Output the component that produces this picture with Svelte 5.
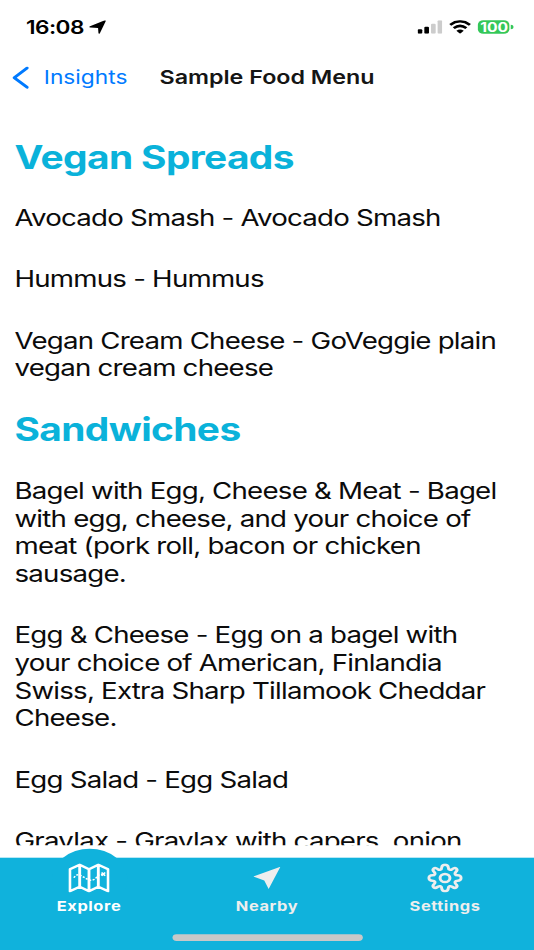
<script>
  const sections = [
    {
      title: 'Vegan Spreads',
      items: [
        { name: 'Avocado Smash', description: 'Avocado Smash' },
        { name: 'Hummus', description: 'Hummus' },
        { name: 'Vegan Cream Cheese', description: 'GoVeggie plain vegan cream cheese' }
      ]
    },
    {
      title: 'Sandwiches',
      items: [
        {
          name: 'Bagel with Egg, Cheese & Meat',
          description: 'Bagel with egg, cheese, and your choice of meat (pork roll, bacon or chicken sausage.'
        },
        {
          name: 'Egg & Cheese',
          description: 'Egg on a bagel with your choice of American, Finlandia Swiss, Extra Sharp Tillamook Cheddar Cheese.'
        },
        { name: 'Egg Salad', description: 'Egg Salad' },
        { name: 'Gravlax', description: 'Gravlax with capers, onion' }
      ]
    }
  ];

  const tabs = [
    { id: 'explore', label: 'Explore' },
    { id: 'nearby', label: 'Nearby' },
    { id: 'settings', label: 'Settings' }
  ];

  let active = $state('explore');
</script>

<div class="viewport">
  <div class="screen">
    <div class="status">
      <span class="time">16:08</span>
      <svg class="location" viewBox="0 0 12 12">
        <path d="M11.8 .8 7.6 11.3Q7.1 12.3 6.7 11.2L6.4 6.7.9 6.3Q-.5 5.9.7 5.1L10.8.2Q12.2-.2 11.8.8Z" />
      </svg>
      <svg class="signal" viewBox="0 0 18 12">
        <rect x="0" y="8" width="3.4" height="4" rx="0.9" />
        <rect x="4.9" y="5.7" width="3.4" height="6.3" rx="0.9" />
        <rect class="off" x="9.8" y="3" width="3.4" height="9" rx="0.9" />
        <rect class="off" x="14.6" y="0" width="3.4" height="12" rx="0.9" />
      </svg>
      <svg class="wifi" viewBox="0 0 16 12">
        <path class="arc" d="M.8 4.1Q8-2.3 15.2 4.1M3.4 7Q8 3 12.6 7" />
        <path d="M5.3 9.4Q8 7.2 10.7 9.4L8 12Z" />
      </svg>
      <div class="battery">
        <span>100</span>
      </div>
    </div>

    <header>
      <button class="back">
        <svg viewBox="0 0 12 20"><path d="M10.8 1.4 1.4 10l9.4 8.6" /></svg>
        <span>Insights</span>
      </button>
      <h1>Sample Food Menu</h1>
    </header>

    <main>
      {#each sections as section}
        <section>
          <h2>{section.title}</h2>
          {#each section.items as item}
            <p>{item.name} - {item.description}</p>
          {/each}
        </section>
      {/each}
    </main>

    <nav>
      <div class="tabs">
        {#each tabs as tab}
          <button class="tab" class:active={active === tab.id} onclick={() => (active = tab.id)}>
            {#if tab.id === 'explore'}
              <svg class="map" viewBox="0 0 30 26">
                <path d="M1 5.2 8.2 1.2 15 5.2 21.8 1.2 29 5.2V24.8L21.8 20.8 15 24.8 8.2 20.8 1 24.8ZM8.2 1.2V20.8M15 5.2V24.8M21.8 1.2V20.8" />
                <path class="trail" d="M4 12.8Q6 8.8 9 10.8T15 15Q19 15.4 20.5 12.4T25 10" />
                <path class="cross" d="m24.2 8.2 2.6 2.8m0-2.8L24.2 11" />
              </svg>
            {:else if tab.id === 'nearby'}
              <svg class="arrow" viewBox="0 0 20 20">
                <path d="M19.8.1 11.2 19.8 8 12.3 0 8.7Z" />
              </svg>
            {:else}
              <svg class="gear" viewBox="0 0 26 26">
                <path d="M10.6 3.8C10.6.3 15.4.3 15.4 3.8C15.4 5.8 17 6.2 18.2 5.2C20.7 2.9 23.1 5.3 20.8 7.8C19.8 9 20.2 10.6 22.2 10.6C25.7 10.6 25.7 15.4 22.2 15.4C20.2 15.4 19.8 17 20.8 18.2C23.1 20.7 20.7 23.1 18.2 20.8C17 19.8 15.4 20.2 15.4 22.2C15.4 25.7 10.6 25.7 10.6 22.2C10.6 20.2 9 19.8 7.8 20.8C5.3 23.1 2.9 20.7 5.2 18.2C6.2 17 5.8 15.4 3.8 15.4C.3 15.4.3 10.6 3.8 10.6C5.8 10.6 6.2 9 5.2 7.8C2.9 5.3 5.3 2.9 7.8 5.2C9 6.2 10.6 5.8 10.6 3.8Z" />
                <circle cx="13" cy="13" r="3.6" />
              </svg>
            {/if}
            <span>{tab.label}</span>
          </button>
        {/each}
      </div>
      <div class="home"></div>
    </nav>
  </div>
</div>

<style>
  :global(body) {
    margin: 0;
    background: #fff;
  }

  .viewport {
    width: 534px;
    height: 950px;
    overflow: hidden;
  }

  /* 390x844 phone layout stretched over the whole viewport */
  .screen {
    display: flex;
    flex-direction: column;
    width: 390px;
    height: 844px;
    transform: scale(1.36923, 1.12559);
    transform-origin: 0 0;
    background: #fff;
    color: #0b0b0b;
    font-family: Inter, 'Liberation Sans', sans-serif;
  }

  button {
    padding: 0;
    border: 0;
    background: none;
    font-family: inherit;
  }

  .status {
    display: flex;
    flex: none;
    align-items: center;
    height: 48px;
    padding: 0 17.6px 0 19px;
    box-sizing: border-box;
  }

  .time {
    font-size: 16.5px;
    font-weight: 600;
    letter-spacing: -0.4px;
    color: #000;
  }

  .location {
    width: 12.4px;
    height: 12.4px;
    margin-left: 4px;
  }

  .signal {
    width: 18px;
    height: 12px;
    margin-left: auto;
  }

  .off {
    fill: #ccc;
  }

  .wifi {
    width: 16px;
    height: 12px;
    margin: 0 5px;
  }

  .arc {
    fill: none;
    stroke: #000;
    stroke-width: 2.2;
  }

  .battery {
    position: relative;
    width: 23px;
    height: 12.8px;
    border-radius: 4px;
    background: #34c759;
    color: #fff;
    font-size: 11.5px;
    font-weight: 700;
    line-height: 12.8px;
    text-align: center;
  }

  .battery::after {
    content: '';
    position: absolute;
    top: 4.4px;
    right: -2.4px;
    width: 1.4px;
    height: 4px;
    border-radius: 0 2px 2px 0;
    background: #34c759;
  }

  header {
    display: flex;
    flex: none;
    align-items: center;
    height: 41.6px;
    padding-left: 9.2px;
  }

  .back {
    display: flex;
    align-items: center;
    gap: 10.8px;
    width: 107.3px;
    color: #007aff;
    font-size: 16.6px;
    white-space: nowrap;
  }

  .back svg {
    width: 12px;
    height: 20px;
    fill: none;
    stroke: #007aff;
    stroke-width: 2.4;
    stroke-linecap: round;
    stroke-linejoin: round;
  }

  h1 {
    margin: 0;
    font-size: 17px;
    font-weight: 600;
    white-space: nowrap;
    color: #151515;
  }

  main {
    flex: none;
    height: 661.8px;
    padding: 0 16px 0 10.6px;
    box-sizing: border-box;
    overflow: hidden;
  }

  h2 {
    margin: 0 0 25.1px;
    padding-top: 24.7px;
    font-size: 28.4px;
    font-weight: 700;
    letter-spacing: -0.46px;
    line-height: 34px;
    color: #0ab2da;
  }

  section:first-child h2 {
    padding-top: 33.6px;
  }

  p {
    margin: 0 0 29.5px;
    font-size: 20.2px;
    letter-spacing: -0.56px;
    line-height: 24.7px;
  }

  p:last-child {
    margin-bottom: 0;
  }

  nav {
    position: relative;
    flex: none;
    height: 82.4px;
    margin-top: auto;
    background: #10b2dc;
  }

  .tabs {
    display: grid;
    grid-template-columns: repeat(3, 1fr);
  }

  .tab {
    position: relative;
    display: flex;
    flex-direction: column;
    align-items: center;
    height: 68.4px;
    color: #eee;
    font-size: 12px;
    font-weight: 700;
    letter-spacing: 0.42px;
  }

  .tab.active {
    color: #fff;
  }

  .tab.active::before {
    content: '';
    position: absolute;
    top: -8px;
    left: 37.5px;
    width: 55px;
    height: 55px;
    border-radius: 50%;
    background: #10b2dc;
  }

  .tab svg {
    position: relative;
    height: 26px;
    margin-top: 5.4px;
    fill: none;
    stroke: currentColor;
    stroke-linejoin: round;
  }

  .tab span {
    position: relative;
    margin-top: 4px;
    line-height: 15px;
  }

  .map {
    width: 30px;
    stroke-width: 2.1;
  }

  .trail {
    stroke-width: 1.2;
    stroke-dasharray: 1.6 1.1;
  }

  .cross {
    stroke-width: 1.3;
  }

  .tab .arrow {
    width: 20px;
    height: 20px;
    margin: 8.4px 0 3px;
    fill: currentColor;
    stroke: none;
  }

  .gear {
    width: 26px;
    stroke-width: 2.2;
  }

  .home {
    width: 139px;
    height: 5.6px;
    margin: 0 auto;
    border-radius: 3px;
    background: #c8c8c8;
  }
</style>
